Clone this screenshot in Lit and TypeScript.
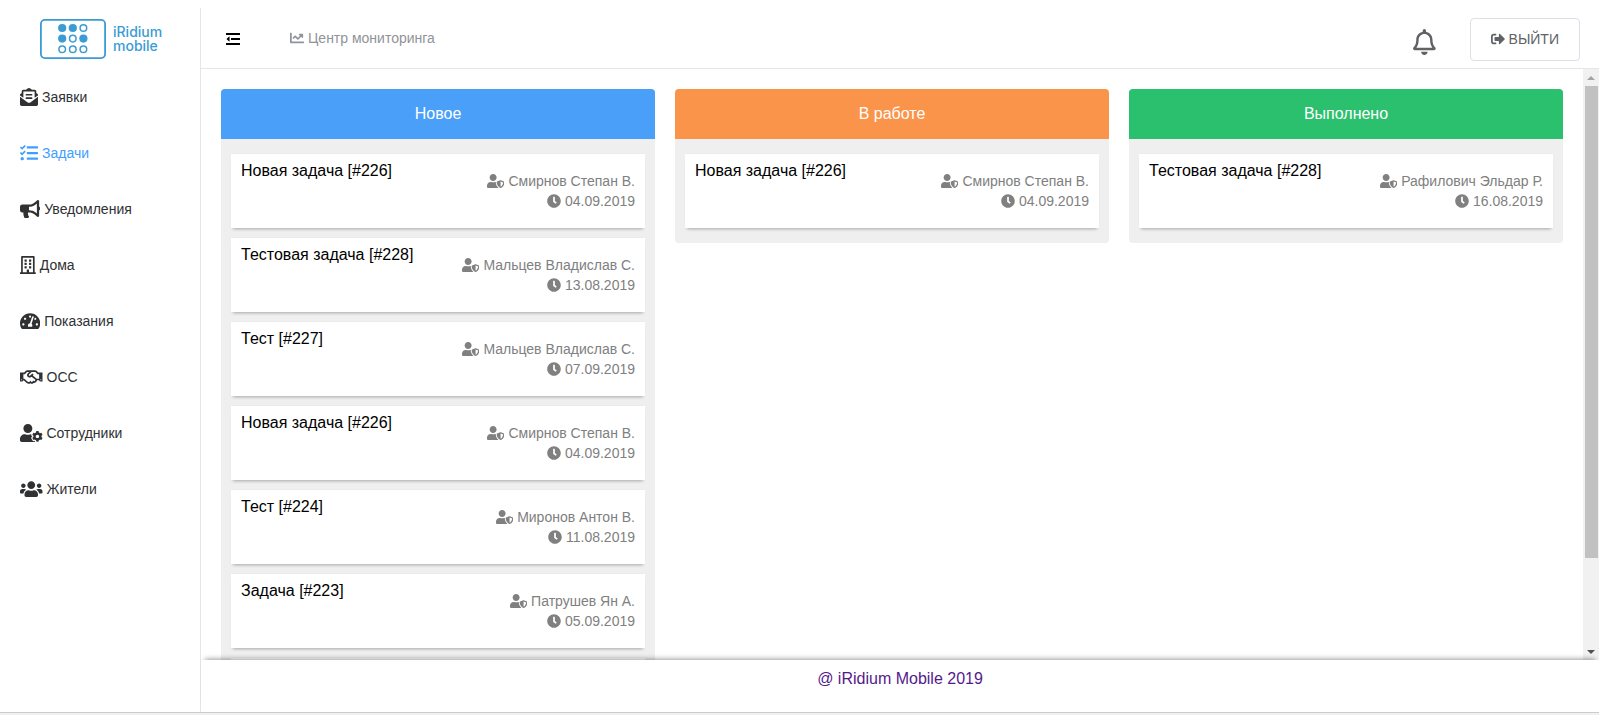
import { LitElement, html, css, svg } from "lit";
import { customElement, property, state } from "lit/decorators.js";
import { classMap } from "lit/directives/class-map.js";

/** Glyphs: width of the 512-high view box, then the path. */
const ICONS: Record<string, [number, string]> = {
  requests: [512, "M176 216h160c8.84 0 16-7.16 16-16v-16c0-8.84-7.16-16-16-16H176c-8.84 0-16 7.16-16 16v16c0 8.84 7.16 16 16 16zm-16 80c0 8.84 7.16 16 16 16h160c8.84 0 16-7.16 16-16v-16c0-8.84-7.16-16-16-16H176c-8.84 0-16 7.16-16 16v16zm96 121.13c-16.42 0-32.84-5.06-46.86-15.19L0 250.86V464c0 26.51 21.49 48 48 48h416c26.51 0 48-21.49 48-48V250.86L302.86 401.94c-14.02 10.12-30.44 15.19-46.86 15.19zm237.61-254.18c-8.85-6.94-17.24-13.47-29.61-22.81V96c0-26.51-21.49-48-48-48h-77.55c-3.04-2.2-5.87-4.26-9.04-6.56C312.6 29.17 279.2-.35 256 0c-23.2-.35-56.59 29.17-73.41 41.44-3.17 2.3-6 4.36-9.04 6.56H96c-26.51 0-48 21.49-48 48v44.14c-12.37 9.33-20.76 15.87-29.61 22.81A47.995 47.995 0 0 0 0 200.72v10.65l96 69.35V96h320v184.72l96-69.35v-10.65c0-14.74-6.78-28.67-18.39-37.77z"],
  tasks: [512, "M139.61 35.5a12 12 0 0 0-17 0L58.93 98.81l-22.7-22.12a12 12 0 0 0-17 0L3.53 92.41a12 12 0 0 0 0 17l47.59 47.4a12.78 12.78 0 0 0 17.61 0l15.59-15.62L156.52 69a12.09 12.09 0 0 0 .09-17zm0 159.19a12 12 0 0 0-17 0l-63.68 63.72-22.7-22.1a12 12 0 0 0-17 0L3.53 252a12 12 0 0 0 0 17L51 316.5a12.77 12.77 0 0 0 17.6 0l15.7-15.69 72.2-72.22a12 12 0 0 0 .09-16.9zM64 368c-26.49 0-48.59 21.5-48.59 48S37.53 464 64 464a48 48 0 0 0 0-96zm432 16H208a16 16 0 0 0-16 16v32a16 16 0 0 0 16 16h288a16 16 0 0 0 16-16v-32a16 16 0 0 0-16-16zm0-320H208a16 16 0 0 0-16 16v32a16 16 0 0 0 16 16h288a16 16 0 0 0 16-16V80a16 16 0 0 0-16-16zm0 160H208a16 16 0 0 0-16 16v32a16 16 0 0 0 16 16h288a16 16 0 0 0 16-16v-32a16 16 0 0 0-16-16z"],
  bullhorn: [576, "M576 240c0-23.63-12.95-44.04-32-55.12V32.01C544 23.26 537.02 0 512 0c-7.12 0-14.19 2.38-19.98 7.02l-85.03 68.03C364.28 109.19 310.66 128 256 128H64c-35.35 0-64 28.65-64 64v96c0 35.35 28.65 64 64 64h33.7c-1.39 10.48-2.18 21.14-2.18 32 0 39.77 9.26 77.35 25.56 110.94 5.19 10.69 16.52 17.06 28.4 17.06h74.28c26.05 0 41.69-29.84 25.9-50.56-16.4-21.52-26.15-48.36-26.15-77.44 0-11.11 1.62-21.79 4.41-32H256c54.66 0 108.28 18.81 150.98 52.95l85.03 68.03a32.023 32.023 0 0 0 19.98 7.02c24.92 0 32-22.78 32-32V295.13C563.05 284.04 576 263.63 576 240zm-96 141.42l-33.05-26.44C392.95 311.78 325.12 288 256 288v-96c69.12 0 136.95-23.78 190.95-66.98L480 98.58v282.84z"],
  building: [448, "M128 148v-40c0-6.6 5.4-12 12-12h40c6.6 0 12 5.4 12 12v40c0 6.6-5.4 12-12 12h-40c-6.6 0-12-5.4-12-12zm140 12h40c6.6 0 12-5.4 12-12v-40c0-6.6-5.4-12-12-12h-40c-6.6 0-12 5.4-12 12v40c0 6.6 5.4 12 12 12zm-128 96h40c6.6 0 12-5.4 12-12v-40c0-6.6-5.4-12-12-12h-40c-6.6 0-12 5.4-12 12v40c0 6.6 5.4 12 12 12zm128 0h40c6.6 0 12-5.4 12-12v-40c0-6.6-5.4-12-12-12h-40c-6.6 0-12 5.4-12 12v40c0 6.6 5.4 12 12 12zm-76 84v-40c0-6.6-5.4-12-12-12h-40c-6.6 0-12 5.4-12 12v40c0 6.6 5.4 12 12 12h40c6.6 0 12-5.4 12-12zm76 12h40c6.6 0 12-5.4 12-12v-40c0-6.6-5.4-12-12-12h-40c-6.6 0-12 5.4-12 12v40c0 6.6 5.4 12 12 12zm180 124v36H0v-36c0-6.6 5.4-12 12-12h19.5V24c0-13.3 10.7-24 24-24h337c13.3 0 24 10.7 24 24v440H436c6.6 0 12 5.4 12 12zM79.5 463H192v-67c0-6.6 5.4-12 12-12h40c6.6 0 12 5.4 12 12v67h112.5V49L80 48l-.5 415z"],
  gauge: [576, "M288 32C128.94 32 0 160.94 0 320c0 52.8 14.25 102.26 39.06 144.8 5.61 9.62 16.3 15.2 27.44 15.2h443c11.14 0 21.83-5.58 27.44-15.2C561.75 422.26 576 372.8 576 320c0-159.06-128.94-288-288-288zm0 64c14.71 0 26.58 10.13 30.32 23.65-1.11 2.26-2.64 4.23-3.45 6.67l-9.22 27.67c-5.13 3.49-10.97 6.01-17.64 6.01-17.67 0-32-14.33-32-32S270.33 96 288 96zM96 384c-17.67 0-32-14.33-32-32s14.33-32 32-32 32 14.33 32 32-14.33 32-32 32zm48-160c-17.67 0-32-14.33-32-32s14.33-32 32-32 32 14.33 32 32-14.33 32-32 32zm246.77-72.41l-61.33 184C343.13 347.33 352 364.54 352 384c0 11.72-3.38 22.55-8.88 32H232.88c-5.5-9.45-8.88-20.28-8.88-32 0-33.94 26.5-61.43 59.9-63.59l61.34-184.01c4.17-12.56 17.73-19.45 30.36-15.17 12.57 4.19 19.35 17.79 15.17 30.36zm14.66 57.2l15.52-46.55c3.47-1.29 7.13-2.23 11.05-2.23 17.67 0 32 14.33 32 32s-14.33 32-32 32c-11.38-.01-20.89-6.28-26.57-15.22zM480 384c-17.67 0-32-14.33-32-32s14.33-32 32-32 32 14.33 32 32-14.33 32-32 32z"],
  handshake: [640, "M519.2 127.9l-47.6-47.6A56.252 56.252 0 0 0 432 64H205.2c-14.8 0-29.1 5.9-39.6 16.3L118 127.9H0v255.7h64c17.6 0 31.8-14.2 31.9-31.7h9.1l84.6 76.4c30.9 25.1 73.8 25.7 105.6 3.8 12.5 10.8 26 15.9 41.1 15.9 18.2 0 35.3-7.4 48.8-24 22.1 8.7 48.2 2.6 64-16.8l26.2-32.3c5.6-6.9 9.1-14.8 10.9-23h57.9c.1 17.5 14.4 31.7 31.9 31.7h64V127.9H519.2zM48 351.6c-8.8 0-16-7.2-16-16s7.2-16 16-16 16 7.2 16 16c0 8.9-7.2 16-16 16zm390-6.9l-26.1 32.2c-2.8 3.4-7.8 4-11.3 1.2l-23.9-19.4-30 36.5c-6 7.3-15 4.8-18 2.4l-36.8-31.5-15.6 19.2c-13.9 17.1-39.2 19.7-55.3 6.6l-97.3-88H96V175.8h41.9l61.7-61.6c2-.8 3.7-1.5 5.7-2.3H262l-38.7 35.5c-29.4 26.9-31.1 72.3-4.4 101.3 14.8 16.2 61.2 41.2 101.5 4.4l8.2-7.5 108.2 87.8c3.4 2.8 3.9 7.9 1.2 11.3zm106-40.8h-69.2c-2.3-2.8-4.9-5.4-7.7-7.7l-102.7-83.4 12.5-11.4c6.5-6 7-16.1 1-22.6L367 167.1c-6-6.5-16.1-6.9-22.6-1l-55.2 50.6c-9.5 8.7-25.7 9.4-34.6 0-9.3-9.9-8.5-25.1 1.2-33.9l65.6-60.1c7.4-6.8 17-10.5 27-10.5l83.7-.2c2.1 0 4.1.8 5.5 2.3l61.7 61.6H544v128zm48 47.7c-8.8 0-16-7.2-16-16s7.2-16 16-16 16 7.2 16 16c0 8.9-7.2 16-16 16z"],
  staff: [640, "M610.5 373.3c2.6-14.1 2.6-28.5 0-42.6l25.8-14.9c3-1.7 4.3-5.2 3.3-8.5-6.7-21.6-18.2-41.2-33.2-57.4-2.3-2.5-6-3.1-9-1.4l-25.8 14.9c-10.9-9.3-23.4-16.5-36.9-21.3v-29.8c0-3.4-2.4-6.4-5.7-7.1-22.3-5-45-4.8-66.2 0-3.3.7-5.7 3.7-5.7 7.1v29.8c-13.5 4.8-26 12-36.9 21.3l-25.8-14.9c-2.9-1.7-6.7-1.1-9 1.4-15 16.2-26.5 35.8-33.2 57.4-1 3.3.4 6.8 3.3 8.5l25.8 14.9c-2.6 14.1-2.6 28.5 0 42.6l-25.8 14.9c-3 1.7-4.3 5.2-3.3 8.5 6.7 21.6 18.2 41.1 33.2 57.4 2.3 2.5 6 3.1 9 1.4l25.8-14.9c10.9 9.3 23.4 16.5 36.9 21.3v29.8c0 3.4 2.4 6.4 5.7 7.1 22.3 5 45 4.8 66.2 0 3.3-.7 5.7-3.7 5.7-7.1v-29.8c13.5-4.8 26-12 36.9-21.3l25.8 14.9c2.9 1.7 6.7 1.1 9-1.4 15-16.2 26.5-35.8 33.2-57.4 1-3.3-.4-6.8-3.3-8.5l-25.8-14.9zM496 400.5c-26.8 0-48.5-21.8-48.5-48.5s21.8-48.5 48.5-48.5 48.5 21.8 48.5 48.5-21.7 48.5-48.5 48.5zM224 256c70.7 0 128-57.3 128-128S294.7 0 224 0 96 57.3 96 128s57.3 128 128 128zm201.2 226.5c-2.3-1.2-4.6-2.6-6.8-3.9l-7.9 4.6c-6 3.4-12.8 5.3-19.6 5.3-10.9 0-21.4-4.6-28.9-12.6-18.3-19.8-32.3-43.9-40.2-69.6-5.5-17.7 1.9-36.4 17.9-45.7l7.9-4.6c-.1-2.6-.1-5.2 0-7.8l-7.9-4.6c-16-9.2-23.4-28-17.9-45.7.9-2.9 2.2-5.8 3.2-8.7-3.8-.3-7.5-1.2-11.4-1.2h-16.7c-22.2 10.2-46.9 16-72.9 16s-50.6-5.8-72.9-16h-16.7C60.2 288 0 348.2 0 422.4V464c0 26.5 21.5 48 48 48h352c10.1 0 19.5-3.2 27.2-8.5-1.2-3.8-2-7.7-2-11.8v-9.2z"],
  residents: [640, "M96 224c35.3 0 64-28.7 64-64s-28.7-64-64-64-64 28.7-64 64 28.7 64 64 64zm448 0c35.3 0 64-28.7 64-64s-28.7-64-64-64-64 28.7-64 64 28.7 64 64 64zm32 32h-64c-17.6 0-33.5 7.1-45.1 18.6 40.3 22.1 68.9 62 75.1 109.4h66c17.7 0 32-14.3 32-32v-32c0-35.3-28.7-64-64-64zm-256 0c61.9 0 112-50.1 112-112S381.9 32 320 32 208 82.1 208 144s50.1 112 112 112zm76.8 32h-8.3c-20.8 10-43.9 16-68.5 16s-47.6-6-68.5-16h-8.3C179.6 288 128 339.6 128 403.2V432c0 26.5 21.5 48 48 48h288c26.5 0 48-21.5 48-48v-28.8c0-63.6-51.6-115.2-115.2-115.2zm-223.7-13.4C161.5 263.1 145.6 256 128 256H64c-35.3 0-64 28.7-64 64v32c0 17.7 14.3 32 32 32h65.9c6.3-47.4 34.9-87.3 75.2-109.4z"],
  assignee: [640, "M622.3 271.1l-115.2-45c-4.1-1.6-12.6-3.7-22.2 0l-115.2 45c-10.7 4.2-17.7 14-17.7 24.9 0 111.6 68.7 188.8 132.9 213.9 9.6 3.7 18 1.6 22.2 0C558.4 489.9 640 420.5 640 296c0-10.9-7-20.7-17.7-24.9zM496 462.4V273.3l95.5 37.3c-5.6 87.1-60.9 135.4-95.5 151.8zM224 256c70.7 0 128-57.3 128-128S294.7 0 224 0 96 57.3 96 128s57.3 128 128 128zm96 40c0-2.5.8-4.8 1.1-7.2-2.5-.1-4.9-.8-7.5-.8h-16.7c-22.2 10.2-46.9 16-72.9 16s-50.6-5.8-72.9-16h-16.7C60.2 288 0 348.2 0 422.4V464c0 26.5 21.5 48 48 48h352c6.8 0 13.3-1.5 19.2-4-54-42.9-99.2-116.7-99.2-212z"],
  clock: [512, "M256,8C119,8,8,119,8,256S119,504,256,504,504,393,504,256,393,8,256,8Zm92.49,313h0l-20,25a16,16,0,0,1-22.49,2.5h0l-67-49.72a40,40,0,0,1-15-31.23V112a16,16,0,0,1,16-16h32a16,16,0,0,1,16,16V256l58,42.5A16,16,0,0,1,348.49,321Z"],
  signOut: [512, "M497 273L329 441c-15 15-41 4.5-41-17v-96H152c-13.3 0-24-10.7-24-24v-96c0-13.3 10.7-24 24-24h136V88c0-21.4 25.9-32 41-17l168 168c9.3 9.4 9.3 24.6 0 34zM192 436v-40c0-6.6-5.4-12-12-12H96c-17.7 0-32-14.3-32-32V160c0-17.7 14.3-32 32-32h84c6.6 0 12-5.4 12-12V76c0-6.6-5.4-12-12-12H96c-53 0-96 43-96 96v192c0 53 43 96 96 96h84c6.6 0 12-5.4 12-12z"],
  outdent: [512, "M12 37h488q12 0 12 12v49q0 12-12 12H12q-12 0-12-12V49q0-12 12-12zM194 219h306q12 0 12 12v50q0 12-12 12H194q-12 0-12-12v-50q0-12 12-12zM12 402h488q12 0 12 12v49q0 12-12 12H12q-12 0-12-12v-49q0-12 12-12zM130 174v164q0 14-12 8L26 264q-8-8 0-16l92-82q12-6 12 8z"],
  bell: [448, "M439.39 362.29c-19.32-20.76-55.47-51.99-55.47-154.29 0-77.7-54.48-139.9-127.94-155.16V32c0-17.67-14.32-32-31.98-32s-31.98 14.33-31.98 32v20.84C118.56 68.1 64.08 130.3 64.08 208c0 102.3-36.15 133.53-55.47 154.29-6 6.45-8.66 14.16-8.61 21.71.11 16.4 12.98 32 32.1 32h383.8c19.12 0 32-15.6 32.1-32 .05-7.55-2.61-15.27-8.61-21.71zM67.53 368c21.22-27.97 44.42-74.33 44.53-159.42 0-.2-.06-.38-.06-.58 0-61.86 50.14-112 112-112s112 50.14 112 112c0 .2-.06.38-.06.58.11 85.1 23.31 131.46 44.53 159.42H67.53zM224 512c35.32 0 63.97-28.65 63.97-64H160.03c0 35.35 28.65 64 63.97 64z"],
  chart: [512, "M496 384H64V80c0-8.84-7.16-16-16-16H16C7.16 64 0 71.16 0 80v336c0 17.67 14.33 32 32 32h464c8.84 0 16-7.16 16-16v-32c0-8.84-7.16-16-16-16zM464 96H345.94c-21.38 0-32.09 25.85-16.97 40.97l32.4 32.4L288 242.75l-73.37-73.37c-12.5-12.5-32.76-12.5-45.25 0l-68.69 68.69c-6.25 6.25-6.25 16.38 0 22.63l22.62 22.62c6.25 6.25 16.38 6.25 22.63 0L192 237.25l73.37 73.37c12.5 12.5 32.76 12.5 45.25 0l96-96 32.4 32.4c15.12 15.12 40.97 4.41 40.97-16.97V112c.01-8.84-7.15-16-15.99-16z"],
};

const NAV = [
  { icon: "requests", label: "Заявки" },
  { icon: "tasks", label: "Задачи" },
  { icon: "bullhorn", label: "Уведомления" },
  { icon: "building", label: "Дома" },
  { icon: "gauge", label: "Показания" },
  { icon: "handshake", label: "ОСС" },
  { icon: "staff", label: "Сотрудники" },
  { icon: "residents", label: "Жители" },
];

interface Task {
  title: string;
  person: string;
  date: string;
}

const COLUMNS: { kind: string; title: string; tasks: Task[] }[] = [
  {
    kind: "fresh",
    title: "Новое",
    tasks: [
      { title: "Новая задача [#226]", person: "Смирнов Степан В.", date: "04.09.2019" },
      { title: "Тестовая задача [#228]", person: "Мальцев Владислав С.", date: "13.08.2019" },
      { title: "Тест [#227]", person: "Мальцев Владислав С.", date: "07.09.2019" },
      { title: "Новая задача [#226]", person: "Смирнов Степан В.", date: "04.09.2019" },
      { title: "Тест [#224]", person: "Миронов Антон В.", date: "11.08.2019" },
      { title: "Задача [#223]", person: "Патрушев Ян А.", date: "05.09.2019" },
      { title: "", person: "", date: "" },
    ],
  },
  {
    kind: "active",
    title: "В работе",
    tasks: [{ title: "Новая задача [#226]", person: "Смирнов Степан В.", date: "04.09.2019" }],
  },
  {
    kind: "done",
    title: "Выполнено",
    tasks: [{ title: "Тестовая задача [#228]", person: "Рафилович Эльдар Р.", date: "16.08.2019" }],
  },
];

@customElement("ui-icon")
export class UiIcon extends LitElement {
  @property() name = "";

  static styles = css`
    :host { display: inline-flex; flex: none; height: 1em; }
    .glyph { display: block; height: 1em; width: auto; fill: currentColor; }
  `;

  render() {
    const [width, path] = ICONS[this.name];
    return html`<svg class="glyph" viewBox="0 0 ${width} 512" aria-hidden="true">${svg`<path d=${path}></path>`}</svg>`;
  }
}

@customElement("task-card")
export class TaskCard extends LitElement {
  @property({ attribute: false }) task!: Task;

  static styles = css`
    :host {
      display: flex;
      justify-content: space-between;
      box-sizing: border-box;
      min-height: 74px;
      padding: 8px 10px;
      background: #fff;
      box-shadow: 0 3px 3px -2px rgba(0, 0, 0, 0.3), 0 -1px 1px -1px rgba(0, 0, 0, 0.1);
    }
    .title { margin: 0; font-size: 16px; line-height: 18px; font-weight: 400; color: #000; }
    .meta { display: flex; flex-direction: column; align-items: flex-end; padding: 9px 0; font-size: 14px; line-height: 20px; color: #808080; }
    .row { display: flex; align-items: center; gap: 4px; }
  `;

  render() {
    const { title, person, date } = this.task;
    if (!title) return html``;
    return html`
      <h3 class="title">${title}</h3>
      <div class="meta">
        <span class="row"><ui-icon name="assignee"></ui-icon>${person}</span>
        <span class="row"><ui-icon name="clock"></ui-icon><time>${date}</time></span>
      </div>
    `;
  }
}

@customElement("brand-logo")
export class BrandLogo extends LitElement {
  static styles = css`
    :host { display: flex; align-items: center; gap: 7px; color: #3b9bd3; }
    .mark { display: block; flex: none; }
    .name { display: flex; flex-direction: column; font: 500 14px/14px Inter, Roboto, sans-serif; }
  `;

  render() {
    const filled = [true, true, false, true, false, true, false, false, false];
    return html`
      <svg class="mark" width="66" height="40" viewBox="0 0 66 40" aria-hidden="true">
        <rect x="0.9" y="0.9" width="64.2" height="38.2" rx="4" fill="none" stroke="currentColor" stroke-width="1.8"></rect>
        ${filled.map((on, i) => svg`<circle
          cx=${22.2 + (i % 3) * 10.6} cy=${9 + Math.floor(i / 3) * 10.6} r=${on ? 4.1 : 3.3}
          fill=${on ? "currentColor" : "none"} stroke="currentColor" stroke-width=${on ? 0 : 1.5}></circle>`)}
      </svg>
      <span class="name"><span>iRidium</span><span>mobile</span></span>
    `;
  }
}

/** Always-visible vertical scrollbar: thumb size and place are fractions of the track. */
@customElement("scroll-rail")
export class ScrollRail extends LitElement {
  @property({ type: Number }) size = 1;
  @property({ type: Number }) offset = 0;

  static styles = css`
    :host { display: flex; flex-direction: column; flex: none; width: 16px; background: #f1f1f1; }
    .arrow { flex: none; display: flex; align-items: center; justify-content: center; width: 16px; height: 17px; padding: 0; border: 0; background: none; color: #505050; }
    .arrow.idle { color: #a3a3a3; }
    .tip { display: block; fill: currentColor; }
    .track { flex: 1; min-height: 0; padding: 0 1px 0 2px; }
    .space { width: 100%; }
    .thumb { background: #c1c1c1; }
  `;

  private step(by: number) {
    this.dispatchEvent(new CustomEvent("step", { detail: by }));
  }

  render() {
    return html`
      <button class=${classMap({ arrow: true, idle: this.offset <= 0 })} aria-label="Вверх" @click=${() => this.step(-40)}>
        <svg class="tip" width="8" height="4" viewBox="0 0 8 4"><path d="M4 0L8 4H0z"></path></svg>
      </button>
      <div class="track">
        <div class="space" style="height: ${this.offset * 100}%"></div>
        <div class="thumb" style="height: ${this.size * 100}%"></div>
      </div>
      <button class=${classMap({ arrow: true, idle: this.offset + this.size >= 1 })} aria-label="Вниз" @click=${() => this.step(40)}>
        <svg class="tip" width="8" height="4" viewBox="0 0 8 4"><path d="M0 0H8L4 4z"></path></svg>
      </button>
    `;
  }
}

@customElement("app-root")
export class AppRoot extends LitElement {
  @state() private current = 1;
  @state() private size = 1;
  @state() private offset = 0;

  private observer?: ResizeObserver;

  static styles = css`
    :host {
      display: flex;
      flex-direction: column;
      box-sizing: border-box;
      height: 100vh;
      padding-top: 8px;
      background: #fff;
      font-family: "Liberation Sans", Arial, sans-serif;
      font-size: 14px;
    }
    .shell { flex: 1; min-height: 0; display: flex; }
    .edge { flex: none; height: 2px; border-top: 1px solid #ccc; background: #f1f1f1; }
    .sidebar { flex: none; width: 200px; border-right: 1px solid #e6e6e6; }
    .brand { display: flex; height: 61px; box-sizing: border-box; padding: 0 40px; align-items: center; }
    .nav { display: flex; flex-direction: column; }
    .nav-link { display: flex; align-items: center; gap: 4px; height: 56px; padding: 0 20px; color: #303133; text-decoration: none; }
    .nav-link.current { color: #409eff; }
    .nav-icon { font-size: 18px; }
    .page { flex: 1; min-width: 0; display: flex; flex-direction: column; }
    .topbar { flex: none; display: flex; align-items: center; box-sizing: border-box; height: 61px; padding: 2px 19px 0 25px; border-bottom: 1px solid #e6e6e6; }
    .plain { display: flex; padding: 0; border: 0; background: none; font: inherit; }
    .collapse { color: #000; margin-right: 50px; }
    .monitor { display: flex; align-items: center; gap: 4px; padding-bottom: 2px; color: #909399; text-decoration: none; }
    .bell { margin-left: auto; padding-top: 6px; color: #606266; font-size: 26px; }
    .logout { display: flex; align-items: center; gap: 4px; margin-left: 34px; padding: 12px 20px; border: 1px solid #dcdfe6; border-radius: 4px; background: #fff; color: #606266; font: inherit; line-height: 17px; }
    .viewport { flex: 1; min-height: 0; display: flex; }
    .board { flex: 1; min-width: 0; overflow-y: auto; scrollbar-width: none; }
    .lanes { display: grid; grid-template-columns: repeat(3, minmax(0, 1fr)); gap: 20px; align-items: start; padding: 20px; }
    .column { border-radius: 4px; overflow: hidden; background: #efefef; }
    .column-title { margin: 0; font-size: 16px; line-height: 50px; font-weight: 400; text-align: center; color: #fff; }
    .fresh { background: #4a9ff9; }
    .active { background: #fa944a; }
    .done { background: #2bc06e; }
    .cards { display: flex; flex-direction: column; gap: 10px; padding: 15px 10px; }
    .footer { flex: none; position: relative; box-sizing: border-box; height: 52px; padding: 10px; background: #fff; text-align: center; font-size: 16px; line-height: 18px; box-shadow: 0 -5px 5px -4px rgba(0, 0, 0, 0.4); }
    .footer-link { color: #551a8b; text-decoration: none; }
  `;

  private get board() {
    return this.renderRoot.querySelector(".board") as HTMLElement;
  }

  firstUpdated() {
    this.observer = new ResizeObserver(() => this.measure());
    this.observer.observe(this.board);
    this.observer.observe(this.renderRoot.querySelector(".lanes")!);
  }

  disconnectedCallback() {
    super.disconnectedCallback();
    this.observer?.disconnect();
  }

  private measure() {
    const { clientHeight, scrollHeight, scrollTop } = this.board;
    this.size = clientHeight / scrollHeight;
    this.offset = scrollTop / scrollHeight;
  }

  private select(event: Event, index: number) {
    event.preventDefault();
    this.current = index;
  }

  render() {
    return html`
      <div class="shell">
        <aside class="sidebar">
          <div class="brand"><brand-logo></brand-logo></div>
          <nav class="nav">
            ${NAV.map((item, i) => html`
              <a href="#" class=${classMap({ "nav-link": true, current: i === this.current })} @click=${(e: Event) => this.select(e, i)}>
                <ui-icon class="nav-icon" name=${item.icon}></ui-icon>${item.label}
              </a>`)}
          </nav>
        </aside>
        <div class="page">
          <header class="topbar">
            <button class="plain collapse" aria-label="Свернуть меню"><ui-icon name="outdent"></ui-icon></button>
            <a class="monitor" href="#"><ui-icon name="chart"></ui-icon>Центр мониторинга</a>
            <button class="plain bell" aria-label="Оповещения"><ui-icon name="bell"></ui-icon></button>
            <button class="logout"><ui-icon name="signOut"></ui-icon>ВЫЙТИ</button>
          </header>
          <main class="viewport">
            <div class="board" @scroll=${this.measure}>
              <div class="lanes">
                ${COLUMNS.map((column) => html`
                  <section class="column">
                    <h2 class="column-title ${column.kind}">${column.title}</h2>
                    <div class="cards">${column.tasks.map((task) => html`<task-card .task=${task}></task-card>`)}</div>
                  </section>`)}
              </div>
            </div>
            <scroll-rail .size=${this.size} .offset=${this.offset}
              @step=${(e: CustomEvent<number>) => this.board.scrollBy(0, e.detail)}></scroll-rail>
          </main>
          <footer class="footer"><a class="footer-link" href="#">@ iRidium Mobile 2019</a></footer>
        </div>
      </div>
      <div class="edge"></div>
    `;
  }
}
